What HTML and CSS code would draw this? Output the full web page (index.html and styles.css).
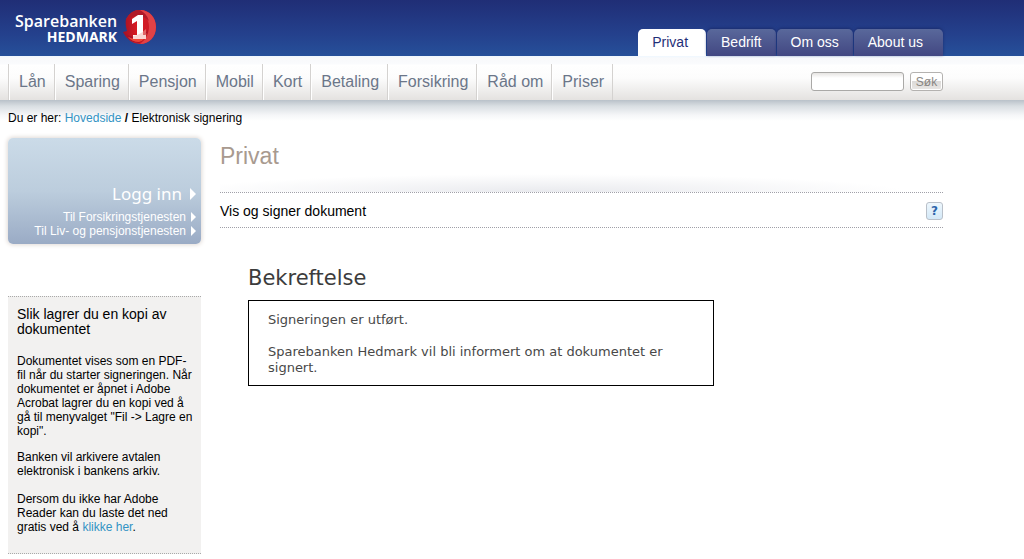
FILE: index.html
```html
<!DOCTYPE html>
<html lang="no">
<head>
<meta charset="utf-8">
<title>Sparebanken Hedmark - Elektronisk signering</title>
<link rel="stylesheet" href="styles.css">
</head>
<body>
<header class="masthead">
  <div class="masthead-inner">
    <a class="logo" href="#">
      <span class="logo-text"><span class="logo-name">Sparebanken</span><span class="logo-region">HEDMARK</span></span>
      <svg class="logo-mark" viewBox="0 0 34 36" aria-hidden="true">
        <defs>
          <linearGradient id="red" x1="0" y1="0" x2="1" y2="0">
            <stop offset="0" stop-color="#a01226"/><stop offset=".4" stop-color="#d81a22"/><stop offset="1" stop-color="#c81c26"/>
          </linearGradient>
        </defs>
        <path d="M4 10Q9 1 18 1C28 1 34 9 34 18C34 28 27 35 18 35Q7 35 1 23L5 22Q3 15 4 10Z" fill="url(#red)"/>
        <path d="M1 23Q8 29 17 28Q24 26 26 20Q26 30 17 34Q7 34 1 23Z" fill="#a5142a"/>
        <path d="M18 1C28 1 34 9 34 18C34 28 27 35 18 35C28 28 32 12 18 1Z" fill="#e04246"/>
        <path d="M4 10Q9 1 17 1Q25 4 27 12Q18 3 4 10Z" fill="#b01a28"/>
        <path d="M6 28Q16 33 25 24Q23 32 17 33Q10 33 6 28Z" fill="#f04436"/>
        <path d="M10 10L16 6H21V26H24V30H11V26H15V12L10 15Z" fill="#fff"/>
        <path d="M11 27Q18 26 24 20V30H11Z" fill="#f3aea8" opacity=".5"/>
      </svg>
    </a>
    <nav class="tabs" aria-label="Seksjoner">
      <a class="tab tab-active" href="#">Privat</a>
      <a class="tab" href="#">Bedrift</a>
      <a class="tab" href="#">Om oss</a>
      <a class="tab" href="#">About us</a>
    </nav>
  </div>
</header>
<div class="navbar">
  <div class="navbar-inner">
    <nav class="menu" aria-label="Hovedmeny">
      <a href="#">Lån</a><a href="#">Sparing</a><a href="#">Pensjon</a><a href="#">Mobil</a><a href="#">Kort</a><a href="#">Betaling</a><a href="#">Forsikring</a><a href="#">Råd om</a><a href="#">Priser</a>
    </nav>
    <form class="search">
      <input class="search-field" type="text" aria-label="Søk">
      <button class="search-button" type="button">Søk</button>
    </form>
  </div>
</div>
<div class="below-nav">
  <p class="crumbs">Du er her: <a href="#">Hovedside</a> <b>/</b> Elektronisk signering</p>
</div>
<div class="page">
  <aside class="sidebar">
    <section class="login">
      <a class="login-main" href="#">Logg inn<svg class="arrow-big" viewBox="0 0 6 12" aria-hidden="true"><path d="M0 0L6 6L0 12Z"/></svg></a>
      <a class="login-link" href="#">Til Forsikringstjenesten<svg class="arrow" viewBox="0 0 5 10" aria-hidden="true"><path d="M0 0L5 5L0 10Z"/></svg></a>
      <a class="login-link" href="#">Til Liv- og pensjonstjenesten<svg class="arrow" viewBox="0 0 5 10" aria-hidden="true"><path d="M0 0L5 5L0 10Z"/></svg></a>
    </section>
    <section class="tips">
      <h2>Slik lagrer du en kopi av dokumentet</h2>
      <p>Dokumentet vises som en PDF-fil når du starter signeringen. Når dokumentet er åpnet i Adobe Acrobat lagrer du en kopi ved å gå til menyvalget "Fil -&gt; Lagre en kopi".</p>
      <p>Banken vil arkivere avtalen elektronisk i bankens arkiv.</p>
      <p class="tips-last">Dersom du ikke har Adobe Reader kan du laste det ned gratis ved å <a href="#">klikke her</a>.</p>
    </section>
  </aside>
  <main class="content">
    <h1>Privat</h1>
    <div class="glow"></div>
    <div class="titlebar">
      <h2>Vis og signer dokument</h2>
      <button class="help" type="button" aria-label="Hjelp">?</button>
    </div>
    <section class="receipt">
      <h3>Bekreftelse</h3>
      <div class="receipt-box">
        <p>Signeringen er utført.</p>
        <p>Sparebanken Hedmark vil bli informert om at dokumentet er signert.</p>
      </div>
    </section>
  </main>
</div>
</body>
</html>
```
FILE: styles.css
```css
* { box-sizing: border-box; }
body {
  margin: 0;
  background: #fff;
  color: #000;
  font: 12px/14px "Liberation Sans", Arial, sans-serif;
}
h1, h2, h3, p { margin: 0; font-weight: normal; }
a { color: #3393c4; text-decoration: none; }

.masthead { background: linear-gradient(#202e76, #24408c 60%, #26509a); }
.masthead-inner {
  display: flex;
  justify-content: space-between;
  align-items: flex-end;
  max-width: 943px;
  height: 56px;
  padding-left: 15px;
}
.logo { display: flex; align-items: flex-start; gap: 5px; height: 47px; color: #fff; }
.logo-text {
  display: flex;
  flex-direction: column;
  align-items: flex-end;
  padding-top: 3px;
  font-family: "Open Sans", sans-serif;
  font-weight: 600;
}
.logo-name { font-size: 16px; line-height: 18px; }
.logo-region { font-size: 14px; line-height: 14px; font-weight: 700; }
.logo-mark { width: 34px; height: 36px; }

.tabs { display: flex; gap: 1px; font-size: 14px; line-height: 26px; }
.tab {
  padding: 0 14px 1px;
  border-radius: 5px 5px 0 0;
  background: linear-gradient(#59689b, #424782);
  box-shadow: 0 -1px 3px #1b2c6e;
  color: #fff;
}
.tab:last-child { padding-right: 20px; }
.tab-active { padding-right: 18px; background: #fff; box-shadow: none; color: #1f2f78; }

.navbar {
  padding-top: 8px;
  background: linear-gradient(#eef7ff, #f8f9fb 2px, #fafbfd 8px, #fff 9px, #fcfcfc 22px, #e4e2e0);
}
.navbar-inner { display: flex; justify-content: space-between; align-items: center; max-width: 943px; padding-left: 8px; }
.menu { display: flex; border-right: 1px solid #d4d2d0; font-size: 16px; line-height: 36px; }
.menu a { padding: 0 8px 0 10px; border-left: 1px solid #d4d2d0; box-shadow: inset 1px 0 #fff; color: #6b7689; }
.search { display: flex; gap: 6px; padding-bottom: 1px; }
.search-field {
  width: 93px;
  height: 19px;
  border: 1px solid #aaa9a7;
  border-radius: 3px;
  background: linear-gradient(#e6e4e2, #fff 5px);
}
.search-button {
  width: 33px;
  height: 19px;
  padding: 0;
  border: 1px solid #b4b2b0;
  border-radius: 3px;
  background: linear-gradient(#fff 45%, #dddbd9 50%, #e8e6e4);
  box-shadow: inset 0 0 0 1px #fff;
  color: #8a8784;
  font: 12px/16px "Liberation Sans", Arial, sans-serif;
}

.below-nav { background: linear-gradient(#b9c1c9, #d9dee2 6px, #f5f6f8 15px, #fff 21px); }
.crumbs { padding: 11px 8px 6px; }

.page { display: flex; gap: 19px; max-width: 943px; padding: 7px 0 0 8px; }
.sidebar { flex: 0 0 193px; }
.login {
  display: flex;
  flex-direction: column;
  align-items: flex-end;
  padding: 45px 5px 6px;
  border-radius: 5px;
  background: linear-gradient(#cbdbe8, #bccddd 50%, #9aabc5);
  box-shadow: 0 0 4px 1px #e0dad6;
}
.login a { display: flex; align-items: center; color: #fff; }
.login-main { gap: 8px; margin-bottom: 5px; font: 17px/22px "Noto Sans", sans-serif; }
.login-link { gap: 5px; }
.login svg { fill: #fff; }
.arrow-big { width: 6px; height: 12px; }
.arrow { width: 5px; height: 10px; }

.tips {
  display: flex;
  flex-direction: column;
  gap: 12px;
  margin-top: 52px;
  padding: 10px 7px 19px 9px;
  border: dotted #a9a9a9;
  border-width: 1px 0;
  background: #f2f1f0;
}
.tips h2 { margin-bottom: 5px; font-size: 14px; line-height: 15px; }
.tips-last { margin-top: 2px; }

.content { flex: 1; min-width: 0; }
.content h1 { color: #a89a8f; font-size: 23px; line-height: 36px; }
.glow {
  height: 18px;
  background: radial-gradient(ellipse 50% 100% at 45% 100%, #e9eaee, #fff);
}
.titlebar {
  display: flex;
  justify-content: space-between;
  align-items: center;
  height: 36px;
  padding-top: 2px;
  border: dotted #a0a0a8;
  border-width: 1px 0;
}
.titlebar h2 { font-size: 14px; line-height: 18px; }
.help {
  width: 17px;
  height: 18px;
  padding: 0;
  border: 1px solid #b9c0c9;
  border-radius: 3px;
  background: linear-gradient(#eef7fd, #d3e8f7);
  color: #2c65ab;
  font: bold 12px/14px "DejaVu Sans", sans-serif;
}
.receipt { max-width: 494px; padding: 35px 0 0 28px; color: #3c3c3c; font-family: Verdana, "DejaVu Sans", sans-serif; }
.receipt h3 { font-size: 21px; line-height: 30px; }
.receipt-box {
  display: flex;
  flex-direction: column;
  gap: 16px;
  margin-top: 7px;
  padding: 11px 19px 9px;
  border: 1px solid #000;
  color: #484848;
  font-size: 13px;
  line-height: 16px;
}
```
